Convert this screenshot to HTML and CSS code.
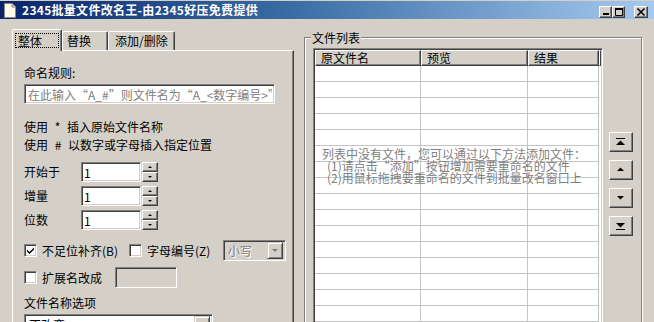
FILE: index.html
```html
<!DOCTYPE html>
<html lang="zh-CN">
<head>
<meta charset="utf-8">
<title>2345批量文件改名王</title>
<link rel="stylesheet" href="styles.css">
</head>
<body>
<div class="window">
  <div class="titlebar">
    <svg class="app-icon" width="12" height="15" viewBox="0 0 12 15"><path d="M0.5 0.5H8L11.5 4V14.5H0.5Z" fill="#fffbe8" stroke="#8a8a8a"/><path d="M8 0.5V4H11.5" fill="#d8d4c8" stroke="#8a8a8a"/></svg>
    <span class="title">2345批量文件改名王-由2345好压免费提供</span>
    <div class="caption-btns">
      <span class="cbtn"><svg width="11" height="10" viewBox="0 0 11 10"><rect x="3" y="6" width="6" height="2" fill="#000"/></svg></span>
      <span class="cbtn"><svg width="11" height="10" viewBox="0 0 11 10"><path d="M2.5 1.5H9.5V8.5H2.5Z" fill="none" stroke="#000"/><rect x="2" y="1" width="8" height="2" fill="#000"/></svg></span>
      <span class="cbtn cbtn-close"><svg width="12" height="10" viewBox="0 0 12 10"><path d="M2.5 1.5L9.5 8.5M9.5 1.5L2.5 8.5" stroke="#000" stroke-width="1.6"/></svg></span>
    </div>
  </div>

  <div class="client">
    <div class="tabctl">
      <div class="tabstrip">
        <div class="tab tab-sel"><span class="focus">整体</span></div>
        <div class="tab tab-2">替换</div>
        <div class="tab tab-3">添加/删除</div>
      </div>
      <div class="tabpanel">
        <div class="label">命名规则:</div>
        <input class="textbox rule" type="text" placeholder="在此输入“A_#”则文件名为“A_<数字编号>”">
        <div class="hints">
          <div>使用 * 插入原始文件名称</div>
          <div>使用 # 以数字或字母插入指定位置</div>
        </div>
        <div class="spin-row first">
          <span class="spin-label">开始于</span>
          <input class="textbox num" type="text" value="1">
          <span class="spin"><span class="spin-btn"><i class="tri-up"></i></span><span class="spin-btn"><i class="tri-down"></i></span></span>
        </div>
        <div class="spin-row">
          <span class="spin-label">增量</span>
          <input class="textbox num" type="text" value="1">
          <span class="spin"><span class="spin-btn"><i class="tri-up"></i></span><span class="spin-btn"><i class="tri-down"></i></span></span>
        </div>
        <div class="spin-row">
          <span class="spin-label">位数</span>
          <input class="textbox num" type="text" value="1">
          <span class="spin"><span class="spin-btn"><i class="tri-up"></i></span><span class="spin-btn"><i class="tri-down"></i></span></span>
        </div>
        <div class="opt-row">
          <span class="cb-item item-pad">
            <span class="checkbox"><svg width="9" height="9" viewBox="0 0 9 9"><path d="M1 3.5L3.5 6L8 1.5V3.5L3.5 8L1 5.5Z" fill="#000"/></svg></span>
            <span class="cb-label">不足位补齐(B)</span>
          </span>
          <span class="cb-item item-alpha">
            <span class="checkbox"></span>
            <span class="cb-label">字母编号(Z)</span>
          </span>
          <span class="combo combo-disabled case">
            <span class="combo-text">小写</span>
            <span class="combo-btn"><i class="tri-down gray"></i></span>
          </span>
        </div>
        <div class="ext-row">
          <span class="cb-item item-ext">
            <span class="checkbox"></span>
            <span class="cb-label">扩展名改成</span>
          </span>
          <input class="textbox ext" type="text" disabled>
        </div>
        <div class="label name-opt">文件名称选项</div>
        <span class="combo name-combo">
          <span class="combo-text">不改变</span>
          <span class="combo-btn"><i class="tri-down"></i></span>
        </span>
      </div>
    </div>

    <fieldset class="group">
      <legend>文件列表</legend>
      <div class="group-body">
        <div class="listview">
          <div class="lv-head">
            <span class="lv-h c1">原文件名</span>
            <span class="lv-h c2">预览</span>
            <span class="lv-h c3">结果</span>
            <span class="lv-h c4"></span>
          </div>
          <div class="lv-rows">
            <div class="lv-row"><span class="c1"></span><span class="c2"></span><span class="c3"></span></div>
            <div class="lv-row"><span class="c1"></span><span class="c2"></span><span class="c3"></span></div>
            <div class="lv-row"><span class="c1"></span><span class="c2"></span><span class="c3"></span></div>
            <div class="lv-row"><span class="c1"></span><span class="c2"></span><span class="c3"></span></div>
            <div class="lv-row"><span class="c1"></span><span class="c2"></span><span class="c3"></span></div>
            <div class="lv-row"><span class="c1"></span><span class="c2"></span><span class="c3"></span></div>
            <div class="lv-row"><span class="c1"></span><span class="c2"></span><span class="c3"></span></div>
            <div class="lv-row"><span class="c1"></span><span class="c2"></span><span class="c3"></span></div>
            <div class="lv-row"><span class="c1"></span><span class="c2"></span><span class="c3"></span></div>
            <div class="lv-row"><span class="c1"></span><span class="c2"></span><span class="c3"></span></div>
            <div class="lv-row"><span class="c1"></span><span class="c2"></span><span class="c3"></span></div>
            <div class="lv-row"><span class="c1"></span><span class="c2"></span><span class="c3"></span></div>
            <div class="lv-row"><span class="c1"></span><span class="c2"></span><span class="c3"></span></div>
            <div class="lv-row"><span class="c1"></span><span class="c2"></span><span class="c3"></span></div>
            <div class="lv-row"><span class="c1"></span><span class="c2"></span><span class="c3"></span></div>
            <div class="lv-row"><span class="c1"></span><span class="c2"></span><span class="c3"></span></div>
            <div class="lv-row"><span class="c1"></span><span class="c2"></span><span class="c3"></span></div>
          </div>
          <div class="lv-msg">
            <div>列表中没有文件，您可以通过以下方法添加文件：</div>
            <div class="msg-item">(1)请点击“添加”按钮增加需要重命名的文件</div>
            <div class="msg-item">(2)用鼠标拖拽要重命名的文件到批量改名窗口上</div>
          </div>
        </div>
        <div class="move-btns">
          <span class="mbtn"><svg width="22" height="18" viewBox="0 0 22 18"><rect x="6" y="5" width="9" height="1" fill="#000"/><path d="M10.5 7.5L15 12H6Z" fill="#000"/></svg></span>
          <span class="mbtn"><svg width="22" height="18" viewBox="0 0 22 18"><path d="M10.5 6.5L14 10H7Z" fill="#000"/></svg></span>
          <span class="mbtn"><svg width="22" height="18" viewBox="0 0 22 18"><path d="M7 7H14L10.5 10.5Z" fill="#000"/></svg></span>
          <span class="mbtn"><svg width="22" height="18" viewBox="0 0 22 18"><path d="M6 6H15L10.5 10.5Z" fill="#000"/><rect x="6" y="12" width="9" height="1" fill="#000"/></svg></span>
        </div>
      </div>
    </fieldset>
  </div>
</div>
</body>
</html>
```

FILE: styles.css
```css
* { box-sizing: border-box; }

html, body {
  margin: 0;
  padding: 0;
}

body {
  width: 654px;
  height: 322px;
  overflow: hidden;
  background: #d4d0c8;
  font-family: "Noto Sans CJK SC", "Noto Sans", sans-serif;
  font-size: 12px;
  color: #000;
}

.window {
  height: 322px;
  display: flex;
  flex-direction: column;
}

/* ---------- title bar ---------- */
.titlebar {
  margin-top: 1px;
  height: 18px;
  flex: none;
  display: flex;
  align-items: center;
  padding-left: 4px;
  padding-right: 6px;
  background: linear-gradient(to right, #0a246a 0%, #3a6ea5 45%, #a6caf0 100%);
  color: #fff;
}

.app-icon { flex: none; }

.title {
  margin-left: 6px;
  font-weight: bold;
  line-height: 14px;
  letter-spacing: 0.3px;
  white-space: nowrap;
}

.caption-btns {
  margin-left: auto;
  align-self: flex-start;
  margin-top: 5px;
  display: flex;
}

.cbtn {
  width: 13px;
  height: 12px;
  background: #d4d0c8;
  border: 1px solid;
  border-color: #fff #404040 #404040 #fff;
  box-shadow: inset -1px -1px #808080;
  display: flex;
  align-items: flex-start;
  justify-content: flex-start;
  overflow: hidden;
}

.cbtn-close {
  width: 14px;
  margin-left: 9px;
}

/* ---------- client ---------- */
.client {
  flex: 1;
  display: flex;
  padding: 10px 0 0 12px;
  min-height: 0;
}

.tabctl {
  width: 282px;
  display: flex;
  flex-direction: column;
}

.tabstrip {
  height: 21px;
  flex: none;
  display: flex;
  align-items: flex-end;
}

.tab {
  height: 19px;
  background: #d4d0c8;
  border-top: 1px solid #fff;
  border-left: 1px solid #fff;
  border-right: 1px solid #404040;
  box-shadow: inset -1px 0 #808080;
  border-radius: 2px 2px 0 0;
  padding: 2px 0 0 4px;
  line-height: 14px;
  white-space: nowrap;
}

.tab-sel {
  width: 50px;
  height: 22px;
  margin-bottom: -1px;
  position: relative;
  z-index: 1;
  padding: 3px 0 0 2px;
}

.focus {
  display: block;
  width: 44px;
  height: 15px;
  border: 1px dotted #000;
  padding-left: 2px;
  line-height: 13px;
}

.tab-2 { width: 46px; }
.tab-3 { width: 67px; padding-left: 6px; }

.tabpanel {
  flex: 1;
  border-top: 1px solid #fff;
  border-left: 1px solid #fff;
  border-right: 1px solid #404040;
  box-shadow: inset -1px 0 #808080;
  padding: 15px 0 0 11px;
}

.label {
  line-height: 14px;
}

.textbox {
  display: block;
  margin: 0;
  height: 20px;
  padding: 0 2px;
  font: inherit;
  font-size: 12px;
  color: #000;
  background: #fff;
  border: 1px solid;
  border-color: #808080 #fff #fff #808080;
  box-shadow: inset 1px 1px #404040, inset -1px -1px #d4d0c8;
  outline: none;
}

.textbox::placeholder { color: #808080; }

.rule {
  width: 251px;
  margin-top: 4px;
  padding-left: 3px;
}

.hints {
  margin-top: 14px;
  line-height: 18px;
  word-spacing: 4px;
}

.spin-row {
  display: flex;
  align-items: center;
  height: 20px;
  margin-top: 4px;
}

.spin-row.first { margin-top: 8px; }

.spin-label { width: 57px; line-height: 14px; }

.num { width: 60px; }

.spin {
  margin-left: 1px;
  width: 16px;
  height: 20px;
  display: flex;
  flex-direction: column;
  justify-content: space-between;
}

.spin-btn {
  height: 10px;
  background: #d4d0c8;
  border: 1px solid;
  border-color: #fff #404040 #404040 #fff;
  box-shadow: inset -1px -1px #808080;
  display: flex;
  align-items: center;
  justify-content: center;
}

.tri-up, .tri-down {
  display: block;
  width: 0;
  height: 0;
  border-left: 3px solid transparent;
  border-right: 3px solid transparent;
}

.tri-up { border-bottom: 3px solid #000; }
.tri-down { border-top: 3px solid #000; }
.spin-btn .tri-up, .spin-btn .tri-down {
  border-left-width: 2px;
  border-right-width: 2px;
  border-top-width: 2px;
  border-bottom-width: 2px;
}
.spin-btn .tri-up { border-top: 0; }
.spin-btn .tri-down { border-bottom: 0; }

.tri-down.gray { border-top-color: #808080; }

.opt-row {
  display: flex;
  align-items: center;
  height: 21px;
  margin-top: 10px;
}

.cb-item {
  display: flex;
  align-items: center;
}

.item-pad { width: 105px; }
.item-alpha { width: 94px; }
.item-ext { width: 91px; }

.checkbox {
  width: 13px;
  height: 13px;
  flex: none;
  background: #fff;
  border: 1px solid;
  border-color: #808080 #fff #fff #808080;
  box-shadow: inset 1px 1px #404040, inset -1px -1px #d4d0c8;
  display: flex;
  align-items: center;
  justify-content: center;
}

.cb-label {
  margin-left: 5px;
  line-height: 14px;
  white-space: nowrap;
}

.combo {
  display: flex;
  align-items: center;
  height: 21px;
  background: #fff;
  border: 1px solid;
  border-color: #808080 #fff #fff #808080;
  box-shadow: inset 1px 1px #404040, inset -1px -1px #d4d0c8;
  padding: 2px 2px 2px 4px;
}

.combo-text {
  flex: 1;
  line-height: 14px;
  white-space: nowrap;
}

.combo-btn {
  width: 16px;
  height: 17px;
  flex: none;
  background: #d4d0c8;
  border: 1px solid;
  border-color: #d4d0c8 #404040 #404040 #d4d0c8;
  box-shadow: inset 1px 1px #fff, inset -1px -1px #808080;
  display: flex;
  align-items: center;
  justify-content: center;
}

.combo-disabled {
  background: #d4d0c8;
}

.combo-disabled .combo-text {
  color: #808080;
  text-shadow: 1px 1px #fff;
}

.case { width: 63px; }

.ext-row {
  display: flex;
  align-items: center;
  height: 21px;
  margin-top: 6px;
}

.ext {
  width: 62px;
  height: 21px;
  background: #d4d0c8;
}

.name-opt { margin-top: 8px; }

.name-combo {
  width: 189px;
  margin-top: 4px;
}

/* ---------- file list group ---------- */
.group {
  margin: 0 0 0 10px;
  padding: 0 0 0 8px;
  width: 338px;
  min-width: 0;
  border: 1px solid #808080;
  box-shadow: 1px 1px 0 #fff, inset 1px 1px 0 #fff;
  align-self: flex-start;
  height: 400px;
}

.group legend {
  padding: 2px 1px 0;
  margin-left: -2px;
  line-height: 14px;
  background: #d4d0c8;
}

.group-body {
  display: flex;
  padding-top: 3px;
}

.listview {
  position: relative;
  width: 290px;
  height: 320px;
  overflow: hidden;
  background: #fff;
  border: 1px solid;
  border-color: #808080 #fff #fff #808080;
  box-shadow: inset 1px 1px #404040, inset -1px -1px #d4d0c8;
  padding: 1px;
}

.lv-head {
  display: flex;
  height: 16px;
}

.lv-h {
  height: 16px;
  background: #d4d0c8;
  border: 1px solid;
  border-color: #fff #404040 #404040 #fff;
  box-shadow: inset -1px -1px #808080;
  padding-left: 5px;
  line-height: 13px;
  white-space: nowrap;
}

.c1 { width: 106px; }
.c2 { width: 107px; }
.c3 { width: 71px; }
.lv-h.c4 { flex: 1; padding: 0; }

.lv-row {
  display: flex;
  height: 16px;
}

.lv-row span {
  height: 16px;
  border-right: 1px solid #c4c4c4;
  border-bottom: 1px solid #c4c4c4;
}

.lv-msg {
  position: absolute;
  left: 8px;
  top: 99px;
  color: #808080;
  line-height: 12px;
  white-space: nowrap;
}

.msg-item { padding-left: 5px; }

.move-btns {
  margin-left: 6px;
  padding-top: 84px;
  display: flex;
  flex-direction: column;
  gap: 8px;
}

.mbtn {
  width: 24px;
  height: 20px;
  background: #d4d0c8;
  border: 1px solid;
  border-color: #fff #404040 #404040 #fff;
  box-shadow: inset -1px -1px #808080;
  display: block;
}

.mbtn svg { display: block; }
```
